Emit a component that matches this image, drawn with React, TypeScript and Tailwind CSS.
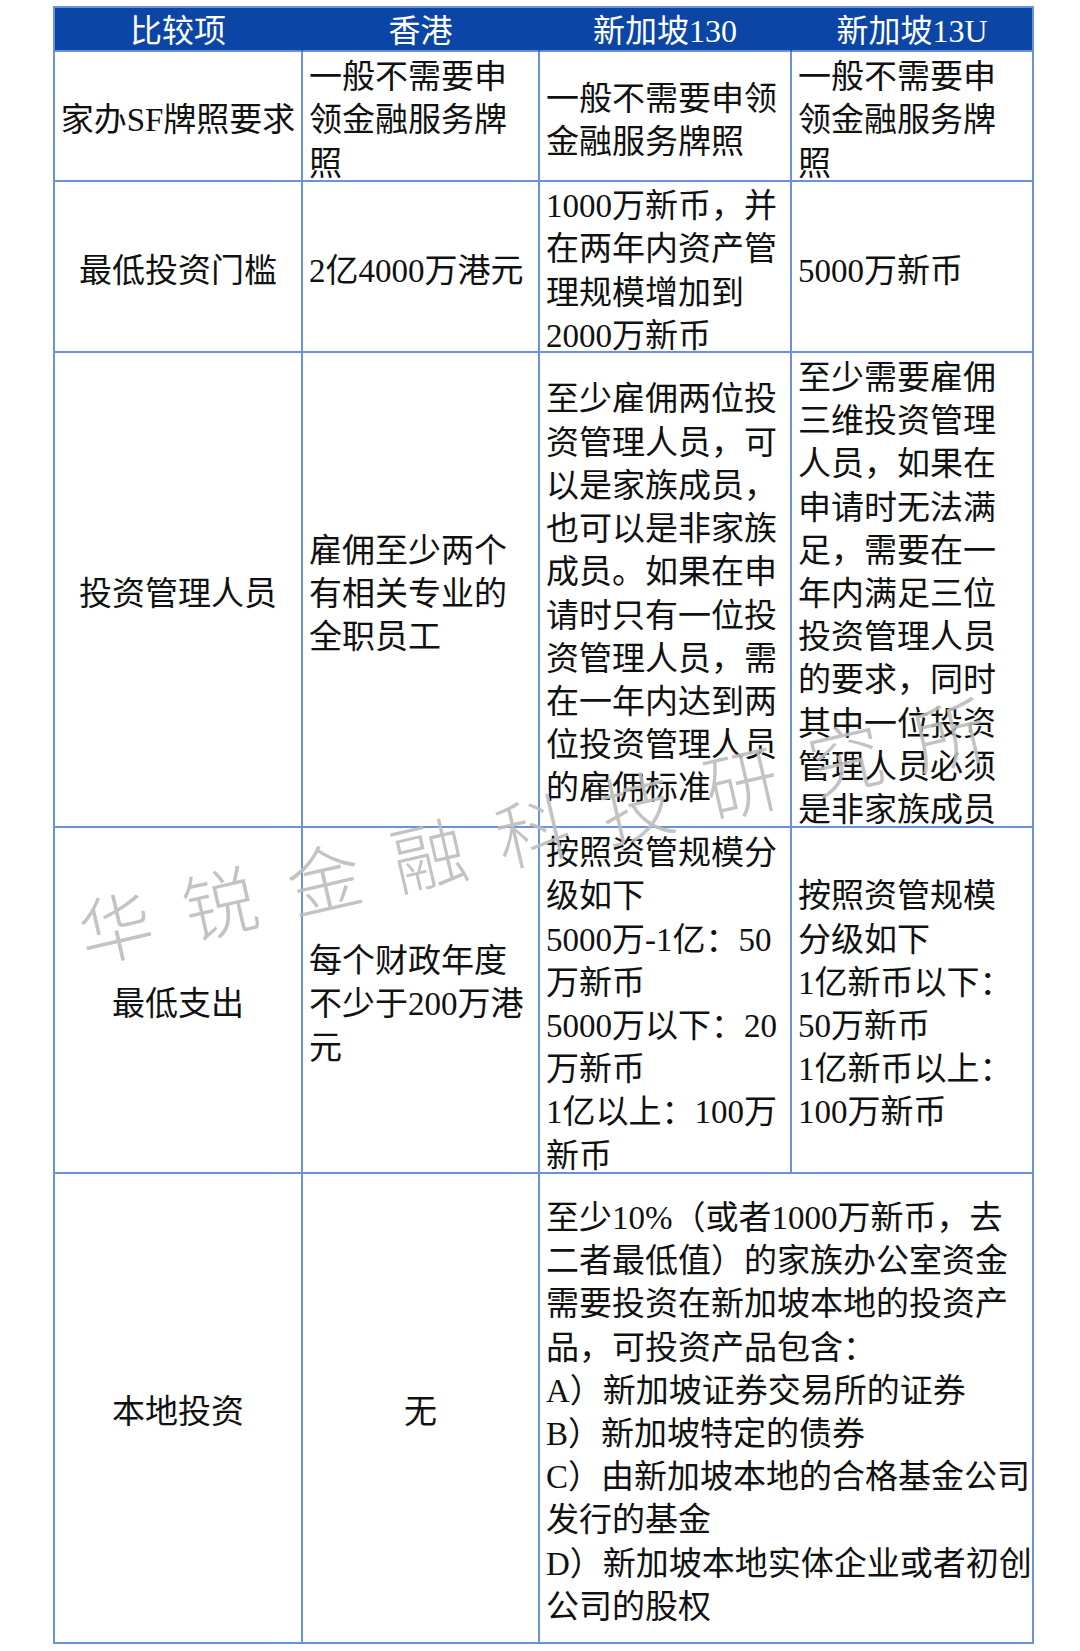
const FONT = "font-['Liberation_Serif','Noto_Sans_CJK_SC',serif]";

type Cell = {
  lines: string[];
  align?: "left" | "center";
  span?: boolean;
};

type Row = { h: string; cells: Cell[] };

const HEAD = ["比较项", "香港", "新加坡130", "新加坡13U"];

const ROWS: Row[] = [
  {
    h: "h-[130px]",
    cells: [
      { lines: ["家办SF牌照要求"], align: "center" },
      { lines: ["一般不需要申", "领金融服务牌", "照"] },
      { lines: ["一般不需要申领", "金融服务牌照"] },
      { lines: ["一般不需要申", "领金融服务牌", "照"] },
    ],
  },
  {
    h: "h-[171px]",
    cells: [
      { lines: ["最低投资门槛"], align: "center" },
      { lines: ["2亿4000万港元"] },
      { lines: ["1000万新币，并", "在两年内资产管", "理规模增加到", "2000万新币"] },
      { lines: ["5000万新币"] },
    ],
  },
  {
    h: "h-[475px]",
    cells: [
      { lines: ["投资管理人员"], align: "center" },
      { lines: ["雇佣至少两个", "有相关专业的", "全职员工"] },
      {
        lines: [
          "至少雇佣两位投",
          "资管理人员，可",
          "以是家族成员，",
          "也可以是非家族",
          "成员。如果在申",
          "请时只有一位投",
          "资管理人员，需",
          "在一年内达到两",
          "位投资管理人员",
          "的雇佣标准",
        ],
      },
      {
        lines: [
          "至少需要雇佣",
          "三维投资管理",
          "人员，如果在",
          "申请时无法满",
          "足，需要在一",
          "年内满足三位",
          "投资管理人员",
          "的要求，同时",
          "其中一位投资",
          "管理人员必须",
          "是非家族成员",
        ],
      },
    ],
  },
  {
    h: "h-[346px]",
    cells: [
      { lines: ["最低支出"], align: "center" },
      { lines: ["每个财政年度", "不少于200万港", "元"] },
      {
        lines: [
          "按照资管规模分",
          "级如下",
          "5000万-1亿：50",
          "万新币",
          "5000万以下：20",
          "万新币",
          "1亿以上：100万",
          "新币",
        ],
      },
      { lines: ["按照资管规模", "分级如下", "1亿新币以下：", "50万新币", "1亿新币以上：", "100万新币"] },
    ],
  },
  {
    h: "h-[470px]",
    cells: [
      { lines: ["本地投资"], align: "center" },
      { lines: ["无"], align: "center" },
      {
        span: true,
        lines: [
          "至少10%（或者1000万新币，去",
          "二者最低值）的家族办公室资金",
          "需要投资在新加坡本地的投资产",
          "品，可投资产品包含：",
          "A）新加坡证券交易所的证券",
          "B）新加坡特定的债券",
          "C）由新加坡本地的合格基金公司",
          "发行的基金",
          "D）新加坡本地实体企业或者初创",
          "公司的股权",
        ],
      },
    ],
  },
];

function Watermark() {
  return (
    <div className="pointer-events-none absolute left-[548px] top-[824px] -translate-x-1/2 -translate-y-1/2 -rotate-[13deg]">
      <div className="whitespace-nowrap text-[74px] leading-none tracking-[33px] text-[#bdbdbd] opacity-90 font-['Noto_Sans_CJK_SC',sans-serif] font-light">
        华锐金融科技研究所
      </div>
    </div>
  );
}

export default function App() {
  return (
    <div className={`relative w-[1080px] h-[1651px] bg-white ${FONT}`}>
      <div className="pt-[6px] pl-[53px]">
        <div className="grid w-[981px] grid-cols-[248px_237px_252px_242px] border-l-2 border-t-2 border-[#6a92dc]">
          {HEAD.map((t, i) => (
            <div
              key={t}
              className={`flex h-[44px] items-center justify-center bg-[#0b46a6] pt-[4px] text-[32px] leading-none text-white border-b-2 border-b-[#6a92dc] ${
                i === 3 ? "border-r-2 border-r-[#6a92dc]" : "border-r-2 border-r-[#0b46a6]"
              }`}
            >
              {t}
            </div>
          ))}
          {ROWS.map((row, ri) =>
            row.cells.map((c, ci) => (
              <div
                key={`${ri}-${ci}`}
                className={`${row.h} ${c.span ? "col-span-2" : ""} flex flex-col justify-center border-r-2 border-b-2 border-[#6a92dc] px-[6px] text-[33px] leading-[43.2px] text-[#111] ${
                  c.align === "center" ? "items-center text-center" : "items-start text-left"
                }`}
              >
                <div className="translate-y-[5px]">
                  {c.lines.map((l, li) => (
                    <div key={li} className="whitespace-nowrap">
                      {l}
                    </div>
                  ))}
                </div>
              </div>
            ))
          )}
        </div>
      </div>
      <Watermark />
    </div>
  );
}
